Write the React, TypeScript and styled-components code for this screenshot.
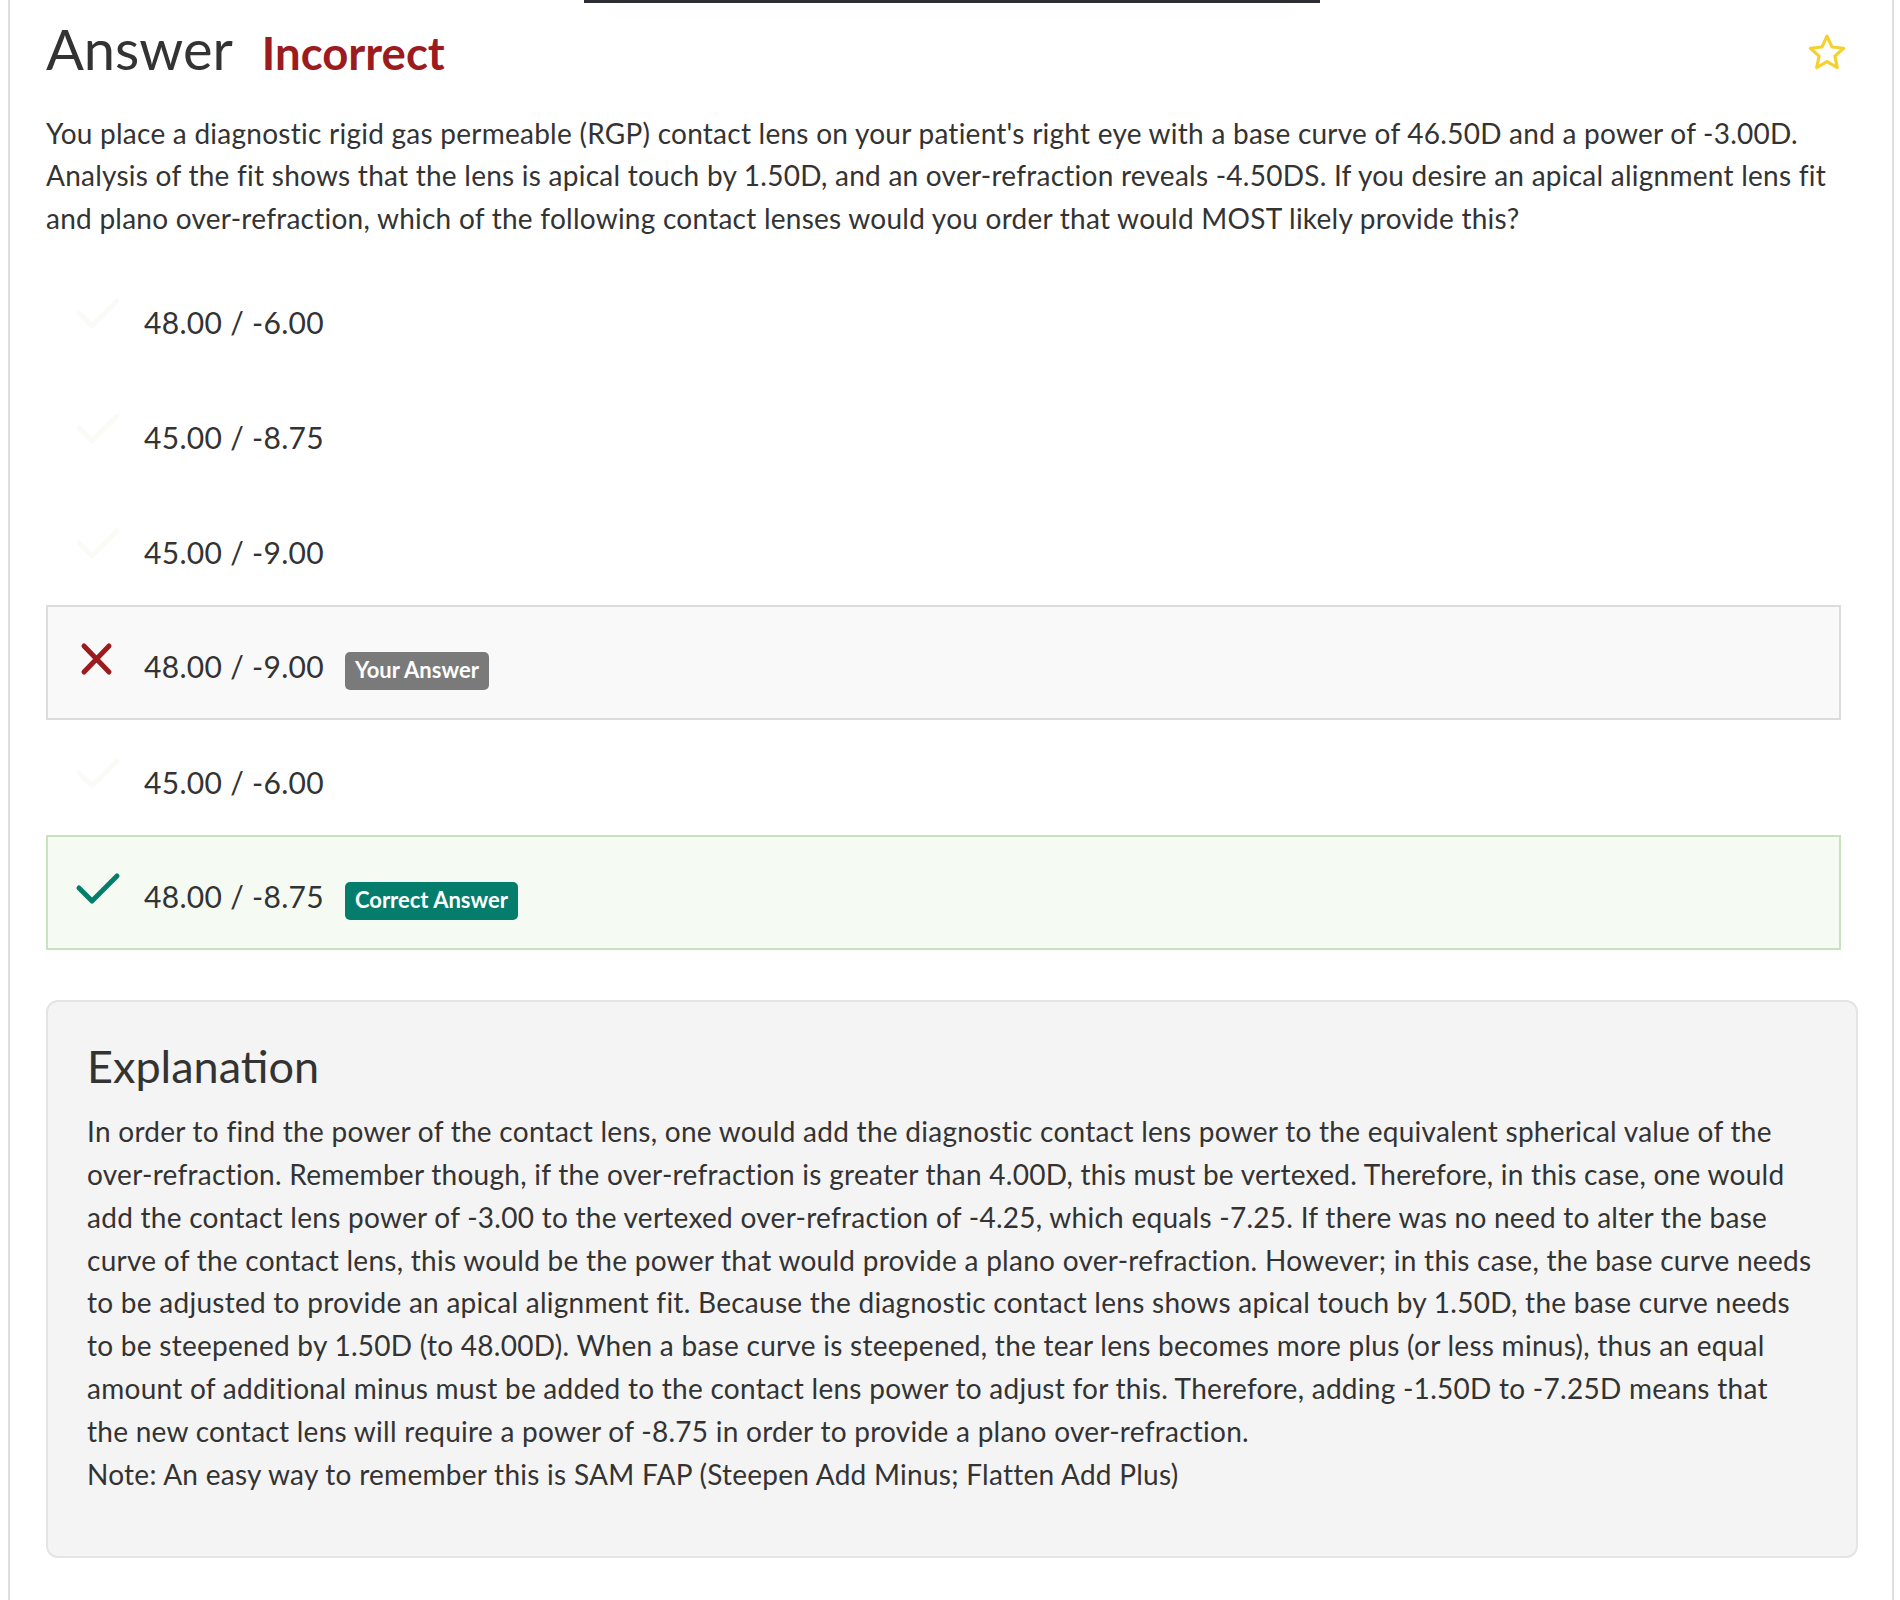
import styled, { createGlobalStyle } from 'styled-components'

const GlobalStyle = createGlobalStyle`
  body {
    margin: 0;
    background: #fff;
    font-family: Lato, "Open Sans", sans-serif;
    color: #333;
  }
`

const Page = styled.div`
  position: relative;
  box-sizing: border-box;
  min-height: 1600px;
  margin: 0 6px 0 8px;
  padding: 17px 34px 40px 36px;
  border-left: 2px solid #dedede;
  border-right: 2px solid #dedede;
`

// bottom edge of the fixed bar that sits above the page
const TopBar = styled.div`
  position: absolute;
  top: 0;
  left: 574px;
  width: 736px;
  height: 3px;
  background: #2b2f33;
  box-shadow: 0 10px 34px rgba(0, 0, 0, 0.06);
`

const Header = styled.header`
  display: flex;
  align-items: center;
`

const TitleGroup = styled.div`
  display: flex;
  align-items: baseline;
`

const Title = styled.h1`
  margin: 0;
  font-size: 56px;
  font-weight: 400;
  line-height: 1.14;
  color: #333;
`

const Verdict = styled.span<{ $correct?: boolean }>`
  margin-left: 29px;
  font-size: 45.5px;
  font-weight: 700;
  line-height: 1.1;
  color: ${(p) => (p.$correct ? '#047d6c' : '#9b1b1e')};
`

const FavButton = styled.button`
  margin: 6px 11px 0 auto;
  padding: 0;
  border: 0;
  background: none;
  display: flex;
  cursor: pointer;
`

const Question = styled.p`
  margin: 31px 0 0;
  font-size: 28px;
  line-height: 1.515;
  letter-spacing: 0.25px;
`

const Options = styled.div`
  margin: 21px 17px 0 0;
  display: flex;
  flex-direction: column;
`

type Variant = 'plain' | 'wrong' | 'right'

const rowBorder: Record<Variant, string> = {
  plain: 'transparent',
  wrong: '#dcdcdc',
  right: '#c6e3bf',
}

const rowBg: Record<Variant, string> = {
  plain: 'transparent',
  wrong: '#f9f9f9',
  right: '#f5faf3',
}

const OptionRow = styled.div<{ $variant: Variant }>`
  box-sizing: border-box;
  height: 115px;
  display: flex;
  align-items: center;
  padding-left: 27px;
  border: 2px solid ${(p) => rowBorder[p.$variant]};
  background: ${(p) => rowBg[p.$variant]};
`

const IconSlot = styled.div`
  width: 46px;
  height: 34px;
  margin: 0 23px 8px 0;
  display: flex;
  align-items: center;
  justify-content: center;
`

const Label = styled.div`
  margin-top: 8px;
  display: flex;
  align-items: baseline;
  gap: 21px;
  font-size: 30px;
  line-height: 46px;
  letter-spacing: 0.3px;
`

const Badge = styled.span<{ $tone: 'gray' | 'green' }>`
  padding: 5px 10px 7px;
  border-radius: 5px;
  font-size: 22px;
  font-weight: 700;
  line-height: 1.2;
  letter-spacing: 0;
  color: #fff;
  background: ${(p) => (p.$tone === 'green' ? '#047d6c' : '#7a7a7a')};
`

const Explanation = styled.section`
  margin-top: 50px;
  padding: 37px 40px 60px 39px;
  border: 2px solid #e4e4e4;
  border-radius: 12px;
  background: #f4f4f4;
`

const ExplanationTitle = styled.h2`
  margin: 0 0 17px;
  font-size: 45px;
  font-weight: 400;
  line-height: 1.2;
  color: #333;
`

const ExplanationText = styled.div`
  font-size: 28px;
  line-height: 1.53;
  letter-spacing: 0.27px;
`

const StarIcon = () => (
  <svg width="40" height="38" viewBox="0 0 38 36">
    <polygon
      points="19,3 23.7,13.2 34.8,14.4 26.5,21.9 28.8,32.8 19,27.2 9.2,32.8 11.5,21.9 3.2,14.4 14.3,13.2"
      fill="none"
      stroke="#f5d130"
      strokeWidth="3"
      strokeLinejoin="round"
    />
  </svg>
)

const CheckIcon = ({ color }: { color: string }) => (
  <svg width="46" height="34" viewBox="0 0 46 34">
    <polyline points="4,16 17,29 42,4" fill="none" stroke={color} strokeWidth="5" strokeLinecap="round" strokeLinejoin="round" />
  </svg>
)

const CrossIcon = () => (
  <svg width="46" height="34" viewBox="0 0 46 34">
    <path d="M9 4 L34 30 M34 4 L9 30" stroke="#9b1b1e" strokeWidth="5" strokeLinecap="round" />
  </svg>
)

interface Choice {
  text: string
  variant: Variant
}

const choices: Choice[] = [
  { text: '48.00 / -6.00', variant: 'plain' },
  { text: '45.00 / -8.75', variant: 'plain' },
  { text: '45.00 / -9.00', variant: 'plain' },
  { text: '48.00 / -9.00', variant: 'wrong' },
  { text: '45.00 / -6.00', variant: 'plain' },
  { text: '48.00 / -8.75', variant: 'right' },
]

export default function App() {
  return (
    <Page>
      <GlobalStyle />
      <TopBar />
      <Header>
        <TitleGroup>
          <Title>Answer</Title>
          <Verdict>Incorrect</Verdict>
        </TitleGroup>
        <FavButton aria-label="Bookmark question">
          <StarIcon />
        </FavButton>
      </Header>

      <Question>
        You place a diagnostic rigid gas permeable (RGP) contact lens on your patient's right eye with a base curve of
        46.50D and a power of -3.00D. Analysis of the fit shows that the lens is apical touch by 1.50D, and an
        over-refraction reveals -4.50DS. If you desire an apical alignment lens fit and plano over-refraction, which of
        the following contact lenses would you order that would MOST likely provide this?
      </Question>

      <Options>
        {choices.map((choice, i) => (
          <OptionRow key={`choice_${i}`} $variant={choice.variant}>
            <IconSlot>
              {choice.variant === 'wrong' ? (
                <CrossIcon />
              ) : (
                <CheckIcon color={choice.variant === 'right' ? '#047d6c' : '#fafaf6'} />
              )}
            </IconSlot>
            <Label>
              {choice.text}
              {choice.variant === 'wrong' && <Badge $tone="gray">Your Answer</Badge>}
              {choice.variant === 'right' && <Badge $tone="green">Correct Answer</Badge>}
            </Label>
          </OptionRow>
        ))}
      </Options>

      <Explanation>
        <ExplanationTitle>Explanation</ExplanationTitle>
        <ExplanationText>
          In order to find the power of the contact lens, one would add the diagnostic contact lens power to the
          equivalent spherical value of the over-refraction. Remember though, if the over-refraction is greater than
          4.00D, this must be vertexed. Therefore, in this case, one would add the contact lens power of -3.00 to the
          vertexed over-refraction of -4.25, which equals -7.25. If there was no need to alter the base curve of the
          contact lens, this would be the power that would provide a plano over-refraction. However; in this case, the
          base curve needs to be adjusted to provide an apical alignment fit. Because the diagnostic contact lens shows
          apical touch by 1.50D, the base curve needs to be steepened by 1.50D (to 48.00D). When a base curve is
          steepened, the tear lens becomes more plus (or less minus), thus an equal amount of additional minus must be
          added to the contact lens power to adjust for this. Therefore, adding -1.50D to -7.25D means that the new
          contact lens will require a power of -8.75 in order to provide a plano over-refraction.
          <br />
          Note: An easy way to remember this is SAM FAP (Steepen Add Minus; Flatten Add Plus)
        </ExplanationText>
      </Explanation>
    </Page>
  )
}
